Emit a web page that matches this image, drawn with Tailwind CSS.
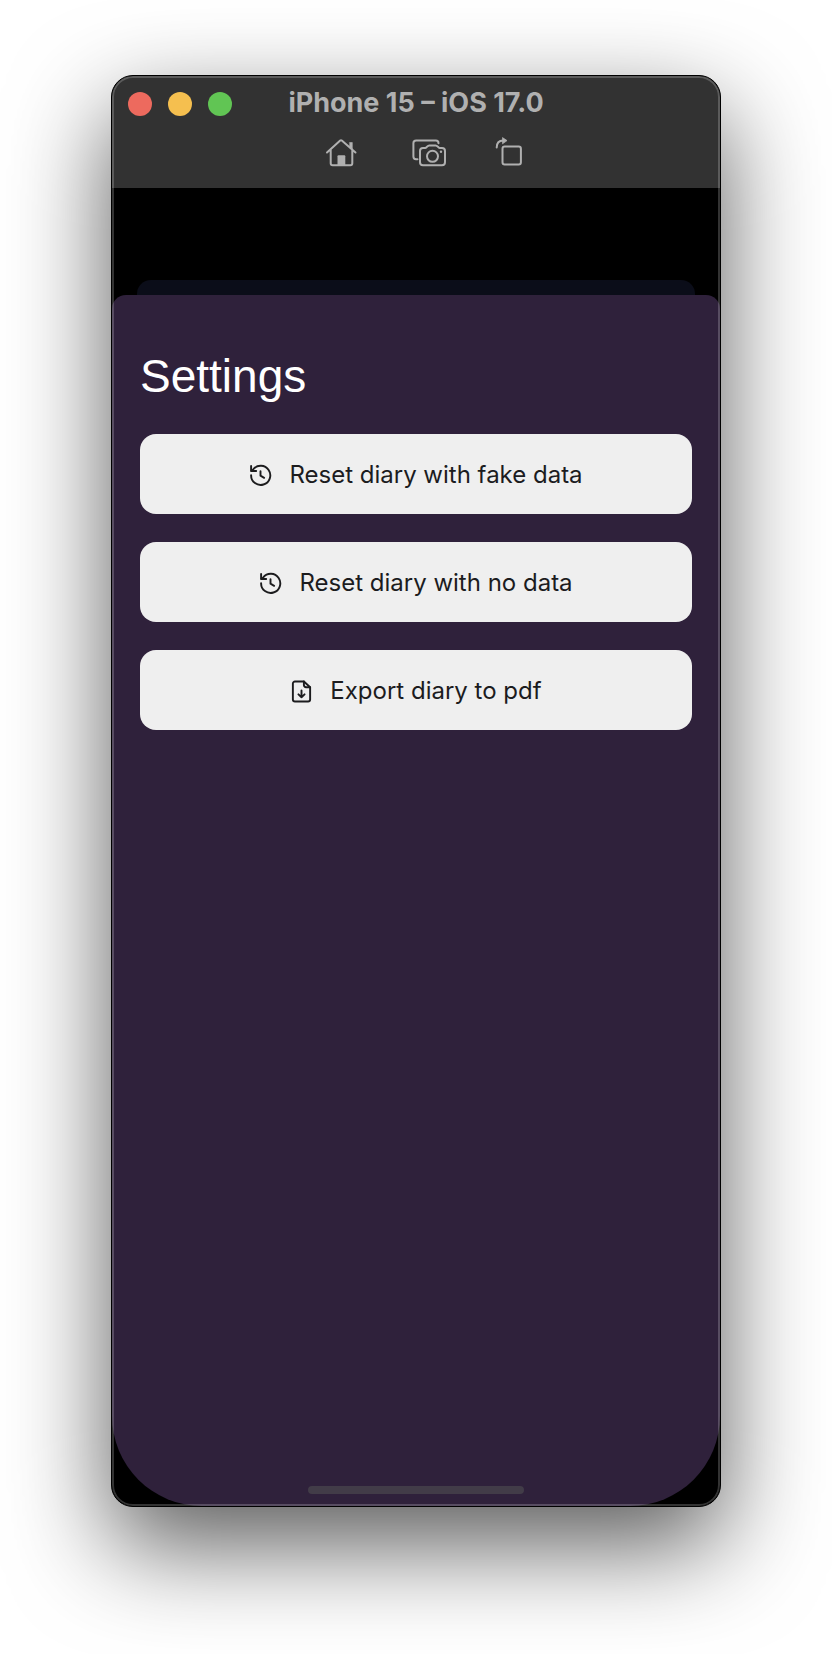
<!DOCTYPE html>
<html lang="en">
<head>
<meta charset="utf-8">
<meta name="viewport" content="width=device-width, initial-scale=1">
<title>iPhone 15 – iOS 17.0</title>
<script src="https://cdn.jsdelivr.net/npm/@tailwindcss/browser@4"></script>
</head>
<body class="flex min-h-screen bg-white px-[111px] pt-[75px] pb-[147px] font-['Inter','Liberation_Sans',sans-serif]">
  <div class="relative flex flex-1 flex-col overflow-hidden rounded-[22px] border border-black bg-black shadow-[0_38px_100px_rgba(0,0,0,0.65)]">
    <header class="h-28 bg-[#323232] text-[#b0b0b0]">
      <div class="grid h-14 grid-cols-[1fr_auto_1fr] items-center px-4">
        <div class="flex gap-4">
          <button type="button" aria-label="Close" class="size-6 rounded-full bg-[#ed6a5e]"></button>
          <button type="button" aria-label="Minimize" class="size-6 rounded-full bg-[#f5bf4f]"></button>
          <button type="button" aria-label="Zoom" class="size-6 rounded-full bg-[#61c554]"></button>
        </div>
        <h1 class="pb-0.5 text-[27px] leading-8 font-bold">iPhone 15 – iOS 17.0</h1>
      </div>
      <div class="flex justify-center pt-1 pl-4">
        <button type="button" aria-label="Home">
          <svg class="h-8 w-8" viewBox="326 136 32 32" fill="none" stroke="currentColor" stroke-width="2" stroke-linecap="round" stroke-linejoin="round"><path d="M328 152.500 341.200 140.600q.8-.7 1.600 0L356.500 152.500M331.700 149.500V163.200q0 2 2 2H351.300q2 0 2-2V149.500"/><path d="M350.800 142.500h2.500v7.500l-2.500-2.200z" fill="currentColor" stroke-width=".6"/><path d="M338.500 156.200q0-1 1-1h5.800q1 0 1 1v9h-7.800z" fill="currentColor" stroke="none"/></svg>
        </button>
        <button type="button" aria-label="Screenshot" class="ml-[54px]">
          <svg class="h-8 w-9" viewBox="412 136 36 32" fill="none" stroke="currentColor" stroke-width="2" stroke-linecap="round" stroke-linejoin="round"><path d="M418.500 159.200h-1.500q-2.600 0-2.600-2.600v-13.400q0-2.700 2.700-2.700h19.800q2.600 0 2.600 2.700"/><path d="M424 147.900h2.300c1.800 0 1.900-2.500 4-2.500h6.300c2.100 0 2.200 2.500 4 2.500h2.400q3 0 3 3v11.300q0 3-3 3H424q-3 0-3-3v-11.300q0-3 3-3z"/><circle cx="433.500" cy="156.300" r="5.500"/><circle cx="442" cy="151.700" r="1.200" fill="currentColor" stroke="none"/></svg>
        </button>
        <button type="button" aria-label="Rotate" class="ml-12">
          <svg class="h-8 w-7" viewBox="495 136 28 32" fill="none" stroke="currentColor" stroke-width="2" stroke-linecap="round" stroke-linejoin="round"><rect x="502.500" y="146.600" width="18.400" height="17.900" rx="2.200"/><path d="M496.700 147.500c0-4.500 2.300-7 6.500-7"/><path d="M502.800 137.800 507 140.600 502.800 143.600z" fill="currentColor" stroke-width=".8"/></svg>
        </button>
      </div>
    </header>

    <div class="mx-[25px] mt-[92px] h-[15px] rounded-t-[14px] bg-[#0b0d19]"></div>

    <main class="flex flex-1 flex-col rounded-t-[14px] rounded-b-[90px] bg-[#2f213b] px-7 pt-[51px] pb-3">
      <h2 class="font-['Liberation_Sans',sans-serif] text-[46px] leading-[60px] text-white">Settings</h2>
      <div class="mt-7 flex flex-col gap-7 text-2xl text-[#1c1c1e]">
        <button type="button" class="flex h-20 items-center justify-center gap-[17px] rounded-2xl bg-[#efefef] pt-0.5">
          <svg class="size-[23px]" viewBox="0 0 24 24" fill="none" stroke="currentColor" stroke-width="2" stroke-linecap="round" stroke-linejoin="round"><path d="M12 7.500v4.700l3.800 2.200"/><path d="M2.200 2v5.300h5.300"/><path d="M2.200 11.800A10 10 0 1 0 4.400 5.600L2.600 7.200"/></svg>
          <span>Reset diary with fake data</span>
        </button>
        <button type="button" class="flex h-20 items-center justify-center gap-[17px] rounded-2xl bg-[#efefef] pt-0.5">
          <svg class="size-[23px]" viewBox="0 0 24 24" fill="none" stroke="currentColor" stroke-width="2" stroke-linecap="round" stroke-linejoin="round"><path d="M12 7.500v4.700l3.800 2.200"/><path d="M2.200 2v5.300h5.300"/><path d="M2.200 11.800A10 10 0 1 0 4.400 5.600L2.600 7.200"/></svg>
          <span>Reset diary with no data</span>
        </button>
        <button type="button" class="flex h-20 items-center justify-center gap-[17px] rounded-2xl bg-[#efefef] pt-0.5">
          <svg class="size-[23px]" viewBox="0 0 24 24" fill="none" stroke="currentColor" stroke-width="2" stroke-linecap="round" stroke-linejoin="round"><path d="M14.500 1.500H5.200a2.200 2.200 0 0 0-2.200 2.200v16.600a2.200 2.200 0 0 0 2.200 2.200h13.600a2.200 2.200 0 0 0 2.200-2.200V7.500z"/><path d="M14.500 1.500v3.800a2.200 2.200 0 0 0 2.200 2.200H21"/><path d="M12 11v7M8.800 15l3.200 3 3.200-3"/></svg>
          <span>Export diary to pdf</span>
        </button>
      </div>
      <div class="mt-auto h-2 w-[216px] self-center rounded-full bg-[#423c48]"></div>
    </main>

    <!-- Inner highlight along the window edge -->
    <div class="pointer-events-none absolute inset-0 rounded-[21px] border-2 border-white/20"></div>
  </div>
</body>
</html>
